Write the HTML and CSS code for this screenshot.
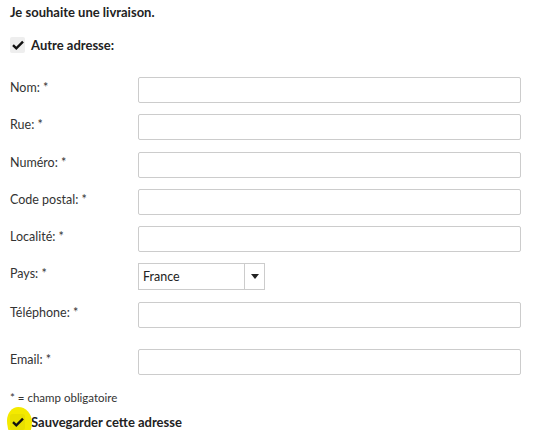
FILE: index.html
```html
<!DOCTYPE html>
<html>
<head>
	<meta charset="utf-8">
	<title>Livraison</title>
	<link rel="stylesheet" href="styles.css">
</head>
<body>
	<div class="delivery">
		<p class="title">Je souhaite une livraison.</p>

		<label class="check">
			<span class="box">
				<svg width="12" height="10" viewBox="0 0 12 10"><path d="M1 5.2 L4.3 8.3 L11 1.6" fill="none" stroke="#111" stroke-width="2.4"/></svg>
			</span>
			Autre adresse:
		</label>

		<div class="fields">
			<div class="row"><label for="nom">Nom: *</label><input type="text" id="nom"></div>
			<div class="row"><label for="rue">Rue: *</label><input type="text" id="rue"></div>
			<div class="row"><label for="numero">Numéro: *</label><input type="text" id="numero"></div>
			<div class="row"><label for="cp">Code postal: *</label><input type="text" id="cp"></div>
			<div class="row"><label for="localite">Localité: *</label><input type="text" id="localite"></div>
			<div class="row"><label for="pays">Pays: *</label>
				<div class="select">
					<span class="value">France</span>
					<span class="arrow"><svg width="8" height="5" viewBox="0 0 8 5"><path d="M0 0 H8 L4 5 Z" fill="#222"/></svg></span>
				</div>
			</div>
			<div class="row"><label for="tel">Téléphone: *</label><input type="text" id="tel"></div>
			<div class="row email"><label for="email">Email: *</label><input type="text" id="email"></div>
		</div>

		<p class="note">* = champ obligatoire</p>

		<label class="check save">
			<span class="highlight"></span>
			<span class="box">
				<svg width="12" height="10" viewBox="0 0 12 10"><path d="M1 5.2 L4.3 8.3 L11 1.6" fill="none" stroke="#111" stroke-width="2.4"/></svg>
			</span>
			Sauvegarder cette adresse
		</label>
	</div>
</body>
</html>
```

FILE: styles.css
```css
body {
	margin: 0;
	padding: 0 10px;
	background-color: #ffffff;
	font-family: Lato, "Noto Sans", sans-serif;
	font-size: 12.5px;
	color: #333333;
}

.title {
	margin: 4px 0 0;
	font-weight: bold;
	font-size: 13px;
	color: #222222;
	line-height: 16px;
}

.check {
	display: flex;
	align-items: center;
	gap: 6px;
	margin-top: 17px;
	font-weight: bold;
	font-size: 13px;
	color: #222222;
	position: relative;
}

.box {
	width: 15px;
	height: 16px;
	background-color: #eeeeee;
	border-radius: 2px;
	display: flex;
	align-items: center;
	justify-content: center;
	position: relative;
}

.fields {
	margin-top: 24px;
}

.row {
	display: grid;
	grid-template-columns: 128px 383px;
	align-items: start;
	margin-bottom: 11.3px;
}

.row:last-child {
	margin-bottom: 0;
}

.row label {
	padding-top: 3px;
	line-height: 16px;
}

.row input {
	height: 26px;
	box-sizing: border-box;
	border: 1px solid #cccccc;
	border-radius: 2px;
	margin: 0;
}

.row.email {
	margin-top: 21px;
}

.select {
	width: 127px;
	height: 27px;
	box-sizing: border-box;
	border: 1px solid #cccccc;
	display: flex;
	align-items: center;
}

.select .value {
	flex: 1;
	padding-left: 4px;
	color: #222222;
}

.select .arrow {
	width: 19px;
	height: 100%;
	border-left: 1px solid #cccccc;
	display: flex;
	align-items: center;
	justify-content: center;
}

.note {
	margin: 16px 0 0;
	font-size: 11.5px;
	line-height: 14px;
}

.save {
	margin-top: 9px;
}

.save .box {
	background-color: rgba(120, 110, 0, 0.08);
}

.highlight {
	position: absolute;
	left: -3px;
	top: -7px;
	width: 25px;
	height: 34px;
	background-color: #f4ea00;
	border-radius: 45% 55% 50% 50% / 40% 45% 55% 60%;
}
```
